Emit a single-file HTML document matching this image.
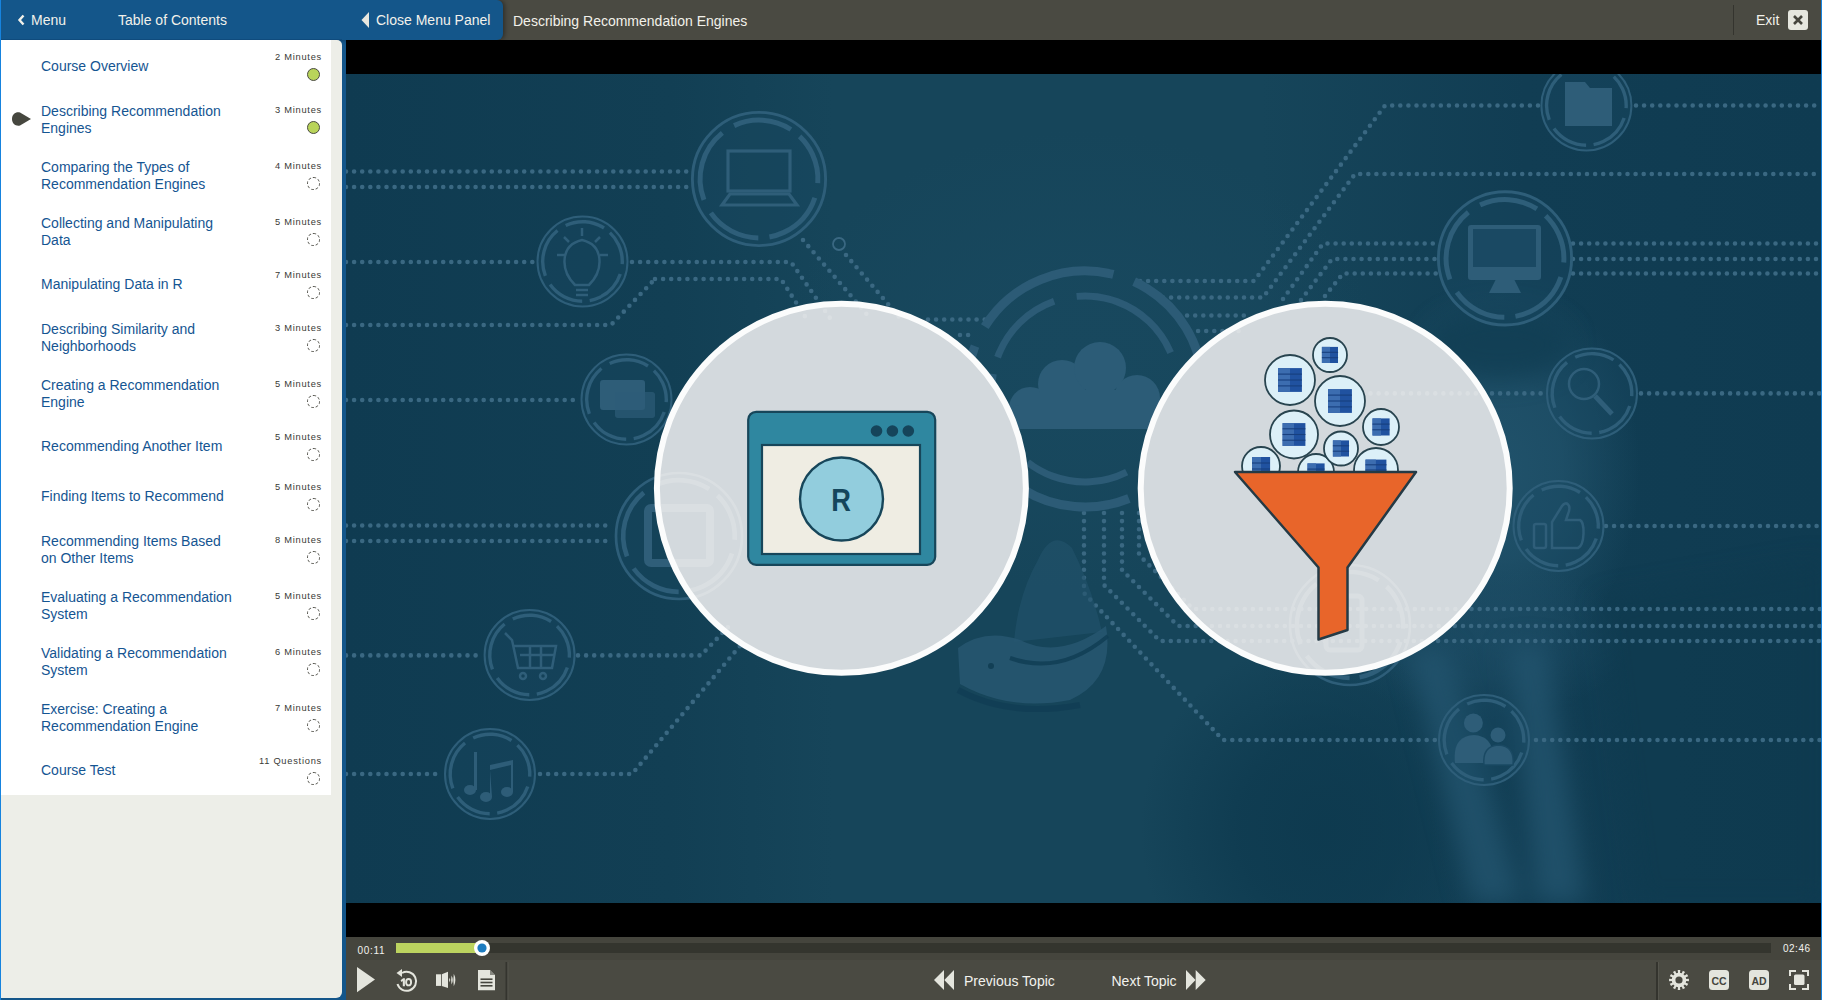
<!DOCTYPE html>
<html><head><meta charset="utf-8"><style>
*{box-sizing:border-box}
html,body{margin:0;padding:0;width:1822px;height:1000px;overflow:hidden;background:#14568a;font-family:"Liberation Sans",sans-serif}
.abs{position:absolute}
#lb{position:absolute;left:0;top:0;width:1px;height:1000px;background:#1683de}
#rb{position:absolute;right:0;top:0;width:1px;height:1000px;background:#1683de}
#hdr{position:absolute;left:0;top:0;width:1821px;height:40px;background:#4a4a42}
#hdrblue{position:absolute;left:0;top:0;width:503px;height:40px;background:#14568a;border-radius:0 6px 6px 0;box-shadow:2px 0 4px rgba(0,0,0,.35)}
.htxt{position:absolute;color:#f2f1ea;font-size:14px;line-height:16px;white-space:nowrap}
#side{position:absolute;left:1px;top:40px;width:341px;height:958px;background:#edeee8;border-radius:0 5px 6px 0;overflow:hidden}
#list{position:absolute;left:0;top:0;width:330px;height:755px;background:#fff}
.row{position:absolute;left:0;width:330px}
.tt{position:absolute;left:40px;color:#155592;font-size:14px;line-height:17px;white-space:nowrap}
.mn{position:absolute;right:9px;color:#3a3a36;font-size:9.3px;line-height:12px;white-space:nowrap;letter-spacing:0.75px}
.ck{position:absolute;left:306px;width:13px;height:13px;border-radius:50%}
.done{background:#b9d45a;border:1px solid #4a4a42}
.todo{border:1px dashed #55554e}
.ptr{position:absolute;left:9.5px;top:21px}
#video{position:absolute;left:346px;top:40px;width:1475px;height:897px;background:#000;overflow:hidden}
#ctrl{position:absolute;left:346px;top:937px;width:1475px;height:63px;background:#4a4a42}
.ct{position:absolute;color:#f2f2ee;white-space:nowrap}
</style></head><body>
<div id="hdr"></div>
<div id="hdrblue"></div>
<div class="htxt" style="left:17px;top:12px"><svg width="9" height="12" viewBox="0 0 9 12" style="position:absolute;left:0;top:1.5px"><path d="M6.5 1.5 L2.5 6 L6.5 10.5" stroke="#f2f1ea" stroke-width="2.4" fill="none"/></svg><span style="position:absolute;left:14px;top:0">Menu</span></div>
<div class="htxt" style="left:118px;top:12px">Table of Contents</div>
<svg class="abs" style="left:360px;top:11px" width="11" height="18" viewBox="0 0 11 18"><path d="M9 1 L1.5 9 L9 17Z" fill="#e8e7df"/></svg>
<div class="htxt" style="left:376px;top:12px">Close Menu Panel</div>
<div class="htxt" style="left:513px;top:13px">Describing Recommendation Engines</div>
<div class="abs" style="left:1733px;top:5px;width:1px;height:30px;background:#34342e"></div>
<div class="htxt" style="left:1756px;top:12px">Exit</div>
<div class="abs" style="left:1788px;top:10px;width:20px;height:20px;background:#e6e7df;border-radius:3px"><svg width="20" height="20" viewBox="0 0 20 20"><path d="M6 6 L14 14 M14 6 L6 14" stroke="#45453d" stroke-width="2.6"/></svg></div>
<div class="abs" style="left:1px;top:39px;width:341px;height:1px;background:#0f4b7d"></div>
<div id="side"><div id="list">
<div class="row" style="top:0px;height:50px"><div class="tt" style="top:18.3px">Course Overview</div><div class="mn" style="top:11px">2 Minutes</div><div class="ck done" style="top:28px"></div></div>
<div class="row" style="top:50px;height:56px"><div class="tt" style="top:13.3px">Describing Recommendation<br>Engines</div><div class="mn" style="top:14px">3 Minutes</div><div class="ck done" style="top:31px"></div><svg class="ptr" width="22" height="16" viewBox="0 0 22 16"><path d="M1 8 C1 3 5 0.5 9 1.5 L20 8 L9 14.5 C5 15.5 1 13 1 8Z" fill="#46473f"/></svg></div>
<div class="row" style="top:106px;height:56px"><div class="tt" style="top:13.3px">Comparing the Types of<br>Recommendation Engines</div><div class="mn" style="top:14px">4 Minutes</div><div class="ck todo" style="top:31px"></div></div>
<div class="row" style="top:162px;height:56px"><div class="tt" style="top:13.3px">Collecting and Manipulating<br>Data</div><div class="mn" style="top:14px">5 Minutes</div><div class="ck todo" style="top:31px"></div></div>
<div class="row" style="top:218px;height:50px"><div class="tt" style="top:18.3px">Manipulating Data in R</div><div class="mn" style="top:11px">7 Minutes</div><div class="ck todo" style="top:28px"></div></div>
<div class="row" style="top:268px;height:56px"><div class="tt" style="top:13.3px">Describing Similarity and<br>Neighborhoods</div><div class="mn" style="top:14px">3 Minutes</div><div class="ck todo" style="top:31px"></div></div>
<div class="row" style="top:324px;height:56px"><div class="tt" style="top:13.3px">Creating a Recommendation<br>Engine</div><div class="mn" style="top:14px">5 Minutes</div><div class="ck todo" style="top:31px"></div></div>
<div class="row" style="top:380px;height:50px"><div class="tt" style="top:18.3px">Recommending Another Item</div><div class="mn" style="top:11px">5 Minutes</div><div class="ck todo" style="top:28px"></div></div>
<div class="row" style="top:430px;height:50px"><div class="tt" style="top:18.3px">Finding Items to Recommend</div><div class="mn" style="top:11px">5 Minutes</div><div class="ck todo" style="top:28px"></div></div>
<div class="row" style="top:480px;height:56px"><div class="tt" style="top:13.3px">Recommending Items Based<br>on Other Items</div><div class="mn" style="top:14px">8 Minutes</div><div class="ck todo" style="top:31px"></div></div>
<div class="row" style="top:536px;height:56px"><div class="tt" style="top:13.3px">Evaluating a Recommendation<br>System</div><div class="mn" style="top:14px">5 Minutes</div><div class="ck todo" style="top:31px"></div></div>
<div class="row" style="top:592px;height:56px"><div class="tt" style="top:13.3px">Validating a Recommendation<br>System</div><div class="mn" style="top:14px">6 Minutes</div><div class="ck todo" style="top:31px"></div></div>
<div class="row" style="top:648px;height:56px"><div class="tt" style="top:13.3px">Exercise: Creating a<br>Recommendation Engine</div><div class="mn" style="top:14px">7 Minutes</div><div class="ck todo" style="top:31px"></div></div>
<div class="row" style="top:704px;height:50px"><div class="tt" style="top:18.3px">Course Test</div><div class="mn" style="top:11px">11 Questions</div><div class="ck todo" style="top:28px"></div></div>
</div></div>
<div id="video"><svg width="1475" height="897" viewBox="346 40 1475 897" style="position:absolute;left:0;top:0">
<defs>
<filter id="bl" x="-50%" y="-50%" width="200%" height="200%" color-interpolation-filters="sRGB"><feGaussianBlur stdDeviation="28"/></filter>
<filter id="bl2" x="-50%" y="-50%" width="200%" height="200%" color-interpolation-filters="sRGB"><feGaussianBlur stdDeviation="12"/></filter>
<filter id="bl1" x="-20%" y="-20%" width="140%" height="140%" color-interpolation-filters="sRGB"><feGaussianBlur stdDeviation="0.6"/></filter>
<linearGradient id="bg" x1="0" y1="0" x2="1" y2="0">
<stop offset="0" stop-color="#0f3b51"/><stop offset="0.22" stop-color="#123f54"/><stop offset="0.33" stop-color="#16455a"/><stop offset="0.62" stop-color="#16455a"/><stop offset="0.8" stop-color="#113d53"/><stop offset="1" stop-color="#0f3b51"/>
</linearGradient>
<clipPath id="vc"><rect x="346" y="74" width="1475" height="829"/></clipPath>
</defs>
<rect x="346" y="40" width="1475" height="897" fill="#000"/>
<g clip-path="url(#vc)">
<rect x="346" y="74" width="1475" height="829" fill="url(#bg)"/>
<radialGradient id="g5"><stop offset="0" stop-color="#22546d" stop-opacity="0.9"/><stop offset="0.45" stop-color="#22546d" stop-opacity="0.7200000000000001"/><stop offset="1" stop-color="#22546d" stop-opacity="0"/></radialGradient>
<ellipse cx="1500" cy="470" rx="140" ry="200" fill="url(#g5)"/>
<radialGradient id="g7"><stop offset="0" stop-color="#1a4b62" stop-opacity="0.5"/><stop offset="0.45" stop-color="#1a4b62" stop-opacity="0.4"/><stop offset="1" stop-color="#1a4b62" stop-opacity="0"/></radialGradient>
<ellipse cx="1080" cy="360" rx="300" ry="230" fill="url(#g7)"/>
<radialGradient id="g9"><stop offset="0" stop-color="#1d4d66" stop-opacity="0.7"/><stop offset="0.45" stop-color="#1d4d66" stop-opacity="0.5599999999999999"/><stop offset="1" stop-color="#1d4d66" stop-opacity="0"/></radialGradient>
<ellipse cx="1480" cy="640" rx="150" ry="80" fill="url(#g9)"/>
<radialGradient id="g11"><stop offset="0" stop-color="#0d394e" stop-opacity="0.9"/><stop offset="0.45" stop-color="#0d394e" stop-opacity="0.7200000000000001"/><stop offset="1" stop-color="#0d394e" stop-opacity="0"/></radialGradient>
<ellipse cx="1320" cy="830" rx="180" ry="190" fill="url(#g11)"/>
<g filter="url(#bl2)">
<ellipse cx="1500" cy="345" rx="70" ry="35" fill="#103d53" opacity="0.8"/>
<path d="M1408 648 L1448 648 L1522 903 L1472 903Z" fill="#22536d" opacity="0.85"/>
<path d="M1508 645 L1546 645 L1586 903 L1536 903Z" fill="#22536d" opacity="0.85"/>
<path d="M1600 600 L1821 560 L1821 903 L1640 903Z" fill="#0e394e" opacity="0.5"/>
</g>
<path d="M346,171.5 L689,171.5" fill="none" stroke="#3a6882" stroke-width="4.6" stroke-linecap="round" stroke-dasharray="0 8.1" opacity="1.0"/>
<path d="M346,187 L689,187" fill="none" stroke="#3a6882" stroke-width="4.6" stroke-linecap="round" stroke-dasharray="0 8.1" opacity="1.0"/>
<path d="M346,262 L533,262" fill="none" stroke="#3a6882" stroke-width="4.6" stroke-linecap="round" stroke-dasharray="0 8.1" opacity="1.0"/>
<path d="M632,262 L791,262 L830,318" fill="none" stroke="#3a6882" stroke-width="4.6" stroke-linecap="round" stroke-dasharray="0 8.1" opacity="1.0"/>
<path d="M655,279 L781,279 L806,318" fill="none" stroke="#3a6882" stroke-width="4.6" stroke-linecap="round" stroke-dasharray="0 8.1" opacity="1.0"/>
<path d="M346,325 L611,325 L655,279" fill="none" stroke="#3a6882" stroke-width="4.6" stroke-linecap="round" stroke-dasharray="0 8.1" opacity="1.0"/>
<path d="M803,240 L870,318" fill="none" stroke="#3a6882" stroke-width="4.6" stroke-linecap="round" stroke-dasharray="0 8.1" opacity="1.0"/>
<path d="M846,255 L900,318" fill="none" stroke="#3a6882" stroke-width="4.6" stroke-linecap="round" stroke-dasharray="0 8.1" opacity="1.0"/>
<circle cx="839" cy="244" r="6" fill="none" stroke="#3a6882" stroke-width="1.8"/>
<path d="M346,400 L577,400" fill="none" stroke="#3a6882" stroke-width="4.6" stroke-linecap="round" stroke-dasharray="0 8.1" opacity="1.0"/>
<path d="M346,525.5 L612,525.5" fill="none" stroke="#3a6882" stroke-width="4.6" stroke-linecap="round" stroke-dasharray="0 8.1" opacity="1.0"/>
<path d="M346,541 L612,541" fill="none" stroke="#3a6882" stroke-width="4.6" stroke-linecap="round" stroke-dasharray="0 8.1" opacity="1.0"/>
<path d="M346,655.4 L480,655.4" fill="none" stroke="#3a6882" stroke-width="4.6" stroke-linecap="round" stroke-dasharray="0 8.1" opacity="1.0"/>
<path d="M578,655.4 L701,655.4 L730,625" fill="none" stroke="#3a6882" stroke-width="4.6" stroke-linecap="round" stroke-dasharray="0 8.1" opacity="1.0"/>
<path d="M346,774 L441,774" fill="none" stroke="#3a6882" stroke-width="4.6" stroke-linecap="round" stroke-dasharray="0 8.1" opacity="1.0"/>
<path d="M540,774 L632,774 L745,640" fill="none" stroke="#3a6882" stroke-width="4.6" stroke-linecap="round" stroke-dasharray="0 8.1" opacity="1.0"/>
<path d="M928,319.5 L985,319.5" fill="none" stroke="#3a6882" stroke-width="4.6" stroke-linecap="round" stroke-dasharray="0 8.1" opacity="1.0"/>
<path d="M960,335 L975,335" fill="none" stroke="#3a6882" stroke-width="4.6" stroke-linecap="round" stroke-dasharray="0 8.1" opacity="1.0"/>
<path d="M1140,281 L1254,281 L1385,105.5 L1539,105.5" fill="none" stroke="#3a6882" stroke-width="4.6" stroke-linecap="round" stroke-dasharray="0 8.1" opacity="1.0"/>
<path d="M1636,105.5 L1821,105.5" fill="none" stroke="#3a6882" stroke-width="4.6" stroke-linecap="round" stroke-dasharray="0 8.1" opacity="1.0"/>
<path d="M1163,297.5 L1263,297.5 L1355,174 L1821,174" fill="none" stroke="#3a6882" stroke-width="4.6" stroke-linecap="round" stroke-dasharray="0 8.1" opacity="1.0"/>
<path d="M1283,299 L1323,243.5 L1437,243.5" fill="none" stroke="#3a6882" stroke-width="4.6" stroke-linecap="round" stroke-dasharray="0 8.1" opacity="1.0"/>
<path d="M1301,300 L1332,259 L1437,259" fill="none" stroke="#3a6882" stroke-width="4.6" stroke-linecap="round" stroke-dasharray="0 8.1" opacity="1.0"/>
<path d="M1325,296 L1343,273.5 L1437,273.5" fill="none" stroke="#3a6882" stroke-width="4.6" stroke-linecap="round" stroke-dasharray="0 8.1" opacity="1.0"/>
<path d="M1573,243.5 L1821,243.5" fill="none" stroke="#3a6882" stroke-width="4.6" stroke-linecap="round" stroke-dasharray="0 8.1" opacity="1.0"/>
<path d="M1573,259 L1821,259" fill="none" stroke="#3a6882" stroke-width="4.6" stroke-linecap="round" stroke-dasharray="0 8.1" opacity="1.0"/>
<path d="M1573,273.5 L1821,273.5" fill="none" stroke="#3a6882" stroke-width="4.6" stroke-linecap="round" stroke-dasharray="0 8.1" opacity="1.0"/>
<path d="M1179,315.5 L1244,315.5" fill="none" stroke="#3a6882" stroke-width="4.6" stroke-linecap="round" stroke-dasharray="0 8.1" opacity="1.0"/>
<path d="M1190,331 L1240,331" fill="none" stroke="#3a6882" stroke-width="4.6" stroke-linecap="round" stroke-dasharray="0 8.1" opacity="1.0"/>
<path d="M1330,393.4 L1543,393.4" fill="none" stroke="#3a6882" stroke-width="4.6" stroke-linecap="round" stroke-dasharray="0 8.1" opacity="1.0"/>
<path d="M1641,393.4 L1821,393.4" fill="none" stroke="#3a6882" stroke-width="4.6" stroke-linecap="round" stroke-dasharray="0 8.1" opacity="1.0"/>
<path d="M1606,526 L1821,526" fill="none" stroke="#3a6882" stroke-width="4.6" stroke-linecap="round" stroke-dasharray="0 8.1" opacity="1.0"/>
<path d="M1084,513 L1084,593 L1223,740 L1435,740" fill="none" stroke="#3a6882" stroke-width="4.6" stroke-linecap="round" stroke-dasharray="0 8.1" opacity="1.0"/>
<path d="M1104,513 L1104,585 L1160,641 L1821,641" fill="none" stroke="#3a6882" stroke-width="4.6" stroke-linecap="round" stroke-dasharray="0 8.1" opacity="1.0"/>
<path d="M1122,513 L1122,570 L1178,626 L1821,626" fill="none" stroke="#3a6882" stroke-width="4.6" stroke-linecap="round" stroke-dasharray="0 8.1" opacity="1.0"/>
<path d="M1139,513 L1139,555 L1193,609 L1821,609" fill="none" stroke="#3a6882" stroke-width="4.6" stroke-linecap="round" stroke-dasharray="0 8.1" opacity="1.0"/>
<path d="M1536,740 L1821,740" fill="none" stroke="#3a6882" stroke-width="4.6" stroke-linecap="round" stroke-dasharray="0 8.1" opacity="1.0"/>
<g filter="url(#bl1)"><path d="M1038 560 Q1052 528 1072 548 Q1092 588 1102 632 L1014 642 Q1018 595 1038 560 Z" fill="#23536c" opacity="0.6"/><path d="M958 648 Q985 628 1020 640 Q1060 660 1106 626 Q1115 680 1070 700 Q1010 712 960 684 Z" fill="#285872" opacity="0.8"/><path d="M1010 658 Q1060 676 1108 636" fill="none" stroke="#123f55" stroke-width="4" opacity="0.9"/><circle cx="991" cy="666" r="3" fill="#123f55"/><path d="M958 690 Q1010 718 1080 705" fill="none" stroke="#0f3b51" stroke-width="6" opacity="0.6"/></g>
<circle cx="1085" cy="389" r="118" fill="none" stroke="#2c5b76" stroke-width="9" stroke-dasharray="148 22 126 30 89 30 119 22 133 22" transform="rotate(-148 1085 389)"/>
<circle cx="1085" cy="389" r="93" fill="none" stroke="#2c5b76" stroke-width="7" stroke-dasharray="82 23 117 29 88 23 105 29 70 18" transform="rotate(-160 1085 389)"/>
<g fill="#2c5c77"><circle cx="1030" cy="408" r="21"/><circle cx="1062" cy="384" r="24"/><circle cx="1100" cy="368" r="26"/><circle cx="1137" cy="398" r="23"/><rect x="1009" y="405" width="151" height="24" rx="10"/><rect x="1040" y="390" width="100" height="30"/></g>
<circle cx="759" cy="179" r="66.6" fill="#1a4a64" fill-opacity="0.35" stroke="#2e5e79" stroke-width="2.9"/>
<circle cx="759" cy="179" r="58.9" fill="none" stroke="#2e5e79" stroke-width="5.0" stroke-dasharray="59.3 11.1 51.8 14.8 63.0 11.1 55.6 14.8 74.1 14.8" transform="rotate(-115 759 179)"/>
<g fill="none" stroke="#2f5e79" stroke-width="3.2"><rect x="728" y="151" width="62" height="40"/><path d="M722 205 L797 205 L789 194 L730 194 Z"/></g>
<circle cx="582.5" cy="261.5" r="45" fill="#1a4a64" fill-opacity="0.35" stroke="#2e5e79" stroke-width="2.0"/>
<circle cx="582.5" cy="261.5" r="39.8" fill="none" stroke="#2e5e79" stroke-width="3.4" stroke-dasharray="40.0 7.5 35.0 10.0 42.5 7.5 37.5 10.0 50.0 10.0" transform="rotate(-115 582.5 261.5)"/>
<g fill="none" stroke="#2f5e79" stroke-width="2.5"><path d="M575 285 C560 270 560 245 582 240 C604 245 604 270 589 285 Z"/><path d="M576 290 h12 M576 295 h12"/><path d="M582 228 v8 M557 255 h8 M600 255 h8 M564 237 l5 5 M600 237 l-5 5"/></g>
<circle cx="626.5" cy="399.5" r="45" fill="#1a4a64" fill-opacity="0.35" stroke="#2e5e79" stroke-width="2.0"/>
<circle cx="626.5" cy="399.5" r="39.8" fill="none" stroke="#2e5e79" stroke-width="3.4" stroke-dasharray="40.0 7.5 35.0 10.0 42.5 7.5 37.5 10.0 50.0 10.0" transform="rotate(-115 626.5 399.5)"/>
<g fill="#2e5d78"><rect x="600" y="380" width="45" height="30" rx="3"/><rect x="615" y="392" width="40" height="26" rx="3" opacity="0.7"/></g>
<circle cx="679" cy="536" r="63" fill="#1a4a64" fill-opacity="0.35" stroke="#2e5e79" stroke-width="2.7"/>
<circle cx="679" cy="536" r="55.8" fill="none" stroke="#2e5e79" stroke-width="4.7" stroke-dasharray="56.1 10.5 49.0 14.0 59.6 10.5 52.5 14.0 70.1 14.0" transform="rotate(-115 679 536)"/>
<rect x="648" y="508" width="62" height="55" rx="3" fill="none" stroke="#2f5e79" stroke-width="8"/>
<circle cx="529.6" cy="655" r="45" fill="#1a4a64" fill-opacity="0.35" stroke="#2e5e79" stroke-width="2.0"/>
<circle cx="529.6" cy="655" r="39.8" fill="none" stroke="#2e5e79" stroke-width="3.4" stroke-dasharray="40.0 7.5 35.0 10.0 42.5 7.5 37.5 10.0 50.0 10.0" transform="rotate(-115 529.6 655)"/>
<g fill="none" stroke="#2f5e79" stroke-width="2.5"><path d="M505 633 L512 640 L518 668 L552 668 L556 646 L513 646"/><path d="M520 655 h34 M530 646 v22 M541 646 v22"/><circle cx="523" cy="676" r="3"/><circle cx="543" cy="676" r="3"/></g>
<circle cx="490" cy="774" r="45" fill="#1a4a64" fill-opacity="0.35" stroke="#2e5e79" stroke-width="2.0"/>
<circle cx="490" cy="774" r="39.8" fill="none" stroke="#2e5e79" stroke-width="3.4" stroke-dasharray="40.0 7.5 35.0 10.0 42.5 7.5 37.5 10.0 50.0 10.0" transform="rotate(-115 490 774)"/>
<g fill="#2e5d78"><ellipse cx="470" cy="790" rx="6" ry="5"/><rect x="474" y="752" width="3" height="38"/><ellipse cx="486" cy="797" rx="6" ry="5"/><ellipse cx="507" cy="792" rx="6" ry="5"/><path d="M490 770 L511 765 L511 792 L513 792 L513 760 L490 765 L490 797 L492 797Z"/></g>
<circle cx="1586.4" cy="105.5" r="45" fill="#1a4a64" fill-opacity="0.35" stroke="#2e5e79" stroke-width="2.0"/>
<circle cx="1586.4" cy="105.5" r="39.8" fill="none" stroke="#2e5e79" stroke-width="3.4" stroke-dasharray="40.0 7.5 35.0 10.0 42.5 7.5 37.5 10.0 50.0 10.0" transform="rotate(-115 1586.4 105.5)"/>
<path d="M1565 82 L1585 82 L1590 88 L1612 88 L1612 126 L1565 126 Z" fill="#2e5d78"/>
<circle cx="1505" cy="258.4" r="66.6" fill="#1a4a64" fill-opacity="0.35" stroke="#2e5e79" stroke-width="2.9"/>
<circle cx="1505" cy="258.4" r="58.9" fill="none" stroke="#2e5e79" stroke-width="5.0" stroke-dasharray="59.3 11.1 51.8 14.8 63.0 11.1 55.6 14.8 74.1 14.8" transform="rotate(-115 1505 258.4)"/>
<g fill="#2e5d78"><rect x="1468" y="225" width="73" height="55" rx="3"/><path d="M1496 279 L1514 279 L1521 293 L1489 293Z"/></g><rect x="1473" y="229" width="63" height="38" fill="#1a4963"/>
<circle cx="1592" cy="393.4" r="45" fill="#1a4a64" fill-opacity="0.35" stroke="#2e5e79" stroke-width="2.0"/>
<circle cx="1592" cy="393.4" r="39.8" fill="none" stroke="#2e5e79" stroke-width="3.4" stroke-dasharray="40.0 7.5 35.0 10.0 42.5 7.5 37.5 10.0 50.0 10.0" transform="rotate(-115 1592 393.4)"/>
<g fill="none" stroke="#2f5e79" stroke-width="2.5"><circle cx="1584" cy="384" r="15"/><path d="M1595 396 L1612 414" stroke-width="5"/></g>
<circle cx="1558.5" cy="526" r="45" fill="#1a4a64" fill-opacity="0.35" stroke="#2e5e79" stroke-width="2.0"/>
<circle cx="1558.5" cy="526" r="39.8" fill="none" stroke="#2e5e79" stroke-width="3.4" stroke-dasharray="40.0 7.5 35.0 10.0 42.5 7.5 37.5 10.0 50.0 10.0" transform="rotate(-115 1558.5 526)"/>
<g fill="none" stroke="#2f5e79" stroke-width="2.5"><rect x="1534" y="524" width="12" height="24" rx="2"/><path d="M1552 548 L1552 522 L1562 506 C1566 500 1572 505 1568 514 L1566 520 L1580 520 C1585 522 1585 545 1578 548 Z"/></g>
<circle cx="1350" cy="625" r="60" fill="#1a4a64" fill-opacity="0.35" stroke="#2e5e79" stroke-width="2.6"/>
<circle cx="1350" cy="625" r="53.1" fill="none" stroke="#2e5e79" stroke-width="4.5" stroke-dasharray="53.4 10.0 46.7 13.3 56.7 10.0 50.0 13.3 66.7 13.3" transform="rotate(-115 1350 625)"/>
<circle cx="1484" cy="740" r="45" fill="#1a4a64" fill-opacity="0.35" stroke="#2e5e79" stroke-width="2.0"/>
<circle cx="1484" cy="740" r="39.8" fill="none" stroke="#2e5e79" stroke-width="3.4" stroke-dasharray="40.0 7.5 35.0 10.0 42.5 7.5 37.5 10.0 50.0 10.0" transform="rotate(-115 1484 740)"/>
<g fill="#2e5d78"><circle cx="1473.4" cy="723" r="9.5"/><path d="M1455 763 Q1452 736 1474 735 Q1495 736 1493 763 Z"/><circle cx="1498" cy="735" r="7.5"/><path d="M1484 765 Q1482 746 1498.5 745 Q1515 746 1513 765 Z" stroke="#1a4963" stroke-width="1.5"/></g>
</g>
<circle cx="841.4" cy="488.3" r="184.5" fill="#d3d9dd" stroke="#fbfcfc" stroke-width="6"/>
<circle cx="1325.2" cy="488.3" r="184.5" fill="#d3d9dd" stroke="#fbfcfc" stroke-width="6"/>
<defs><clipPath id="cc"><circle cx="841.4" cy="488.3" r="181.5"/><circle cx="1325.2" cy="488.3" r="181.5"/></clipPath><filter id="wh" color-interpolation-filters="sRGB"><feColorMatrix type="matrix" values="0 0 0 0 1 0 0 0 0 1 0 0 0 0 1 0 0 0 1 0"/></filter></defs>
<g clip-path="url(#cc)"><g filter="url(#wh)" opacity="0.17"><path d="M346,171.5 L689,171.5" fill="none" stroke="#3a6882" stroke-width="4.6" stroke-linecap="round" stroke-dasharray="0 8.1" opacity="1.0"/><path d="M346,187 L689,187" fill="none" stroke="#3a6882" stroke-width="4.6" stroke-linecap="round" stroke-dasharray="0 8.1" opacity="1.0"/><path d="M346,262 L533,262" fill="none" stroke="#3a6882" stroke-width="4.6" stroke-linecap="round" stroke-dasharray="0 8.1" opacity="1.0"/><path d="M632,262 L791,262 L830,318" fill="none" stroke="#3a6882" stroke-width="4.6" stroke-linecap="round" stroke-dasharray="0 8.1" opacity="1.0"/><path d="M655,279 L781,279 L806,318" fill="none" stroke="#3a6882" stroke-width="4.6" stroke-linecap="round" stroke-dasharray="0 8.1" opacity="1.0"/><path d="M346,325 L611,325 L655,279" fill="none" stroke="#3a6882" stroke-width="4.6" stroke-linecap="round" stroke-dasharray="0 8.1" opacity="1.0"/><path d="M803,240 L870,318" fill="none" stroke="#3a6882" stroke-width="4.6" stroke-linecap="round" stroke-dasharray="0 8.1" opacity="1.0"/><path d="M846,255 L900,318" fill="none" stroke="#3a6882" stroke-width="4.6" stroke-linecap="round" stroke-dasharray="0 8.1" opacity="1.0"/><path d="M346,400 L577,400" fill="none" stroke="#3a6882" stroke-width="4.6" stroke-linecap="round" stroke-dasharray="0 8.1" opacity="1.0"/><path d="M346,525.5 L612,525.5" fill="none" stroke="#3a6882" stroke-width="4.6" stroke-linecap="round" stroke-dasharray="0 8.1" opacity="1.0"/><path d="M346,541 L612,541" fill="none" stroke="#3a6882" stroke-width="4.6" stroke-linecap="round" stroke-dasharray="0 8.1" opacity="1.0"/><path d="M346,655.4 L480,655.4" fill="none" stroke="#3a6882" stroke-width="4.6" stroke-linecap="round" stroke-dasharray="0 8.1" opacity="1.0"/><path d="M578,655.4 L701,655.4 L730,625" fill="none" stroke="#3a6882" stroke-width="4.6" stroke-linecap="round" stroke-dasharray="0 8.1" opacity="1.0"/><path d="M346,774 L441,774" fill="none" stroke="#3a6882" stroke-width="4.6" stroke-linecap="round" stroke-dasharray="0 8.1" opacity="1.0"/><path d="M540,774 L632,774 L745,640" fill="none" stroke="#3a6882" stroke-width="4.6" stroke-linecap="round" stroke-dasharray="0 8.1" opacity="1.0"/><path d="M928,319.5 L985,319.5" fill="none" stroke="#3a6882" stroke-width="4.6" stroke-linecap="round" stroke-dasharray="0 8.1" opacity="1.0"/><path d="M960,335 L975,335" fill="none" stroke="#3a6882" stroke-width="4.6" stroke-linecap="round" stroke-dasharray="0 8.1" opacity="1.0"/><path d="M1140,281 L1254,281 L1385,105.5 L1539,105.5" fill="none" stroke="#3a6882" stroke-width="4.6" stroke-linecap="round" stroke-dasharray="0 8.1" opacity="1.0"/><path d="M1636,105.5 L1821,105.5" fill="none" stroke="#3a6882" stroke-width="4.6" stroke-linecap="round" stroke-dasharray="0 8.1" opacity="1.0"/><path d="M1163,297.5 L1263,297.5 L1355,174 L1821,174" fill="none" stroke="#3a6882" stroke-width="4.6" stroke-linecap="round" stroke-dasharray="0 8.1" opacity="1.0"/><path d="M1283,299 L1323,243.5 L1437,243.5" fill="none" stroke="#3a6882" stroke-width="4.6" stroke-linecap="round" stroke-dasharray="0 8.1" opacity="1.0"/><path d="M1301,300 L1332,259 L1437,259" fill="none" stroke="#3a6882" stroke-width="4.6" stroke-linecap="round" stroke-dasharray="0 8.1" opacity="1.0"/><path d="M1325,296 L1343,273.5 L1437,273.5" fill="none" stroke="#3a6882" stroke-width="4.6" stroke-linecap="round" stroke-dasharray="0 8.1" opacity="1.0"/><path d="M1573,243.5 L1821,243.5" fill="none" stroke="#3a6882" stroke-width="4.6" stroke-linecap="round" stroke-dasharray="0 8.1" opacity="1.0"/><path d="M1573,259 L1821,259" fill="none" stroke="#3a6882" stroke-width="4.6" stroke-linecap="round" stroke-dasharray="0 8.1" opacity="1.0"/><path d="M1573,273.5 L1821,273.5" fill="none" stroke="#3a6882" stroke-width="4.6" stroke-linecap="round" stroke-dasharray="0 8.1" opacity="1.0"/><path d="M1179,315.5 L1244,315.5" fill="none" stroke="#3a6882" stroke-width="4.6" stroke-linecap="round" stroke-dasharray="0 8.1" opacity="1.0"/><path d="M1190,331 L1240,331" fill="none" stroke="#3a6882" stroke-width="4.6" stroke-linecap="round" stroke-dasharray="0 8.1" opacity="1.0"/><path d="M1330,393.4 L1543,393.4" fill="none" stroke="#3a6882" stroke-width="4.6" stroke-linecap="round" stroke-dasharray="0 8.1" opacity="1.0"/><path d="M1641,393.4 L1821,393.4" fill="none" stroke="#3a6882" stroke-width="4.6" stroke-linecap="round" stroke-dasharray="0 8.1" opacity="1.0"/><path d="M1606,526 L1821,526" fill="none" stroke="#3a6882" stroke-width="4.6" stroke-linecap="round" stroke-dasharray="0 8.1" opacity="1.0"/><path d="M1084,513 L1084,593 L1223,740 L1435,740" fill="none" stroke="#3a6882" stroke-width="4.6" stroke-linecap="round" stroke-dasharray="0 8.1" opacity="1.0"/><path d="M1104,513 L1104,585 L1160,641 L1821,641" fill="none" stroke="#3a6882" stroke-width="4.6" stroke-linecap="round" stroke-dasharray="0 8.1" opacity="1.0"/><path d="M1122,513 L1122,570 L1178,626 L1821,626" fill="none" stroke="#3a6882" stroke-width="4.6" stroke-linecap="round" stroke-dasharray="0 8.1" opacity="1.0"/><path d="M1139,513 L1139,555 L1193,609 L1821,609" fill="none" stroke="#3a6882" stroke-width="4.6" stroke-linecap="round" stroke-dasharray="0 8.1" opacity="1.0"/><path d="M1536,740 L1821,740" fill="none" stroke="#3a6882" stroke-width="4.6" stroke-linecap="round" stroke-dasharray="0 8.1" opacity="1.0"/><circle cx="759" cy="179" r="58.9" fill="none" stroke="#2e5e79" stroke-width="5.0" stroke-dasharray="59.3 11.1 51.8 14.8 63.0 11.1 55.6 14.8 74.1 14.8" transform="rotate(-115 759 179)"/><circle cx="759" cy="179" r="66.6" fill="none" stroke="#2e5e79" stroke-width="2.9"/><circle cx="582.5" cy="261.5" r="39.8" fill="none" stroke="#2e5e79" stroke-width="3.4" stroke-dasharray="40.0 7.5 35.0 10.0 42.5 7.5 37.5 10.0 50.0 10.0" transform="rotate(-115 582.5 261.5)"/><circle cx="582.5" cy="261.5" r="45" fill="none" stroke="#2e5e79" stroke-width="2.0"/><circle cx="626.5" cy="399.5" r="39.8" fill="none" stroke="#2e5e79" stroke-width="3.4" stroke-dasharray="40.0 7.5 35.0 10.0 42.5 7.5 37.5 10.0 50.0 10.0" transform="rotate(-115 626.5 399.5)"/><circle cx="626.5" cy="399.5" r="45" fill="none" stroke="#2e5e79" stroke-width="2.0"/><circle cx="679" cy="536" r="55.8" fill="none" stroke="#2e5e79" stroke-width="4.7" stroke-dasharray="56.1 10.5 49.0 14.0 59.6 10.5 52.5 14.0 70.1 14.0" transform="rotate(-115 679 536)"/><circle cx="679" cy="536" r="63" fill="none" stroke="#2e5e79" stroke-width="2.7"/><rect x="648" y="508" width="62" height="55" rx="3" fill="none" stroke="#2f5e79" stroke-width="8"/><rect x="1326" y="596" width="36" height="54" rx="4" fill="none" stroke="#2f5e79" stroke-width="5"/><circle cx="529.6" cy="655" r="39.8" fill="none" stroke="#2e5e79" stroke-width="3.4" stroke-dasharray="40.0 7.5 35.0 10.0 42.5 7.5 37.5 10.0 50.0 10.0" transform="rotate(-115 529.6 655)"/><circle cx="529.6" cy="655" r="45" fill="none" stroke="#2e5e79" stroke-width="2.0"/><circle cx="490" cy="774" r="39.8" fill="none" stroke="#2e5e79" stroke-width="3.4" stroke-dasharray="40.0 7.5 35.0 10.0 42.5 7.5 37.5 10.0 50.0 10.0" transform="rotate(-115 490 774)"/><circle cx="490" cy="774" r="45" fill="none" stroke="#2e5e79" stroke-width="2.0"/><circle cx="1586.4" cy="105.5" r="39.8" fill="none" stroke="#2e5e79" stroke-width="3.4" stroke-dasharray="40.0 7.5 35.0 10.0 42.5 7.5 37.5 10.0 50.0 10.0" transform="rotate(-115 1586.4 105.5)"/><circle cx="1586.4" cy="105.5" r="45" fill="none" stroke="#2e5e79" stroke-width="2.0"/><circle cx="1505" cy="258.4" r="58.9" fill="none" stroke="#2e5e79" stroke-width="5.0" stroke-dasharray="59.3 11.1 51.8 14.8 63.0 11.1 55.6 14.8 74.1 14.8" transform="rotate(-115 1505 258.4)"/><circle cx="1505" cy="258.4" r="66.6" fill="none" stroke="#2e5e79" stroke-width="2.9"/><circle cx="1592" cy="393.4" r="39.8" fill="none" stroke="#2e5e79" stroke-width="3.4" stroke-dasharray="40.0 7.5 35.0 10.0 42.5 7.5 37.5 10.0 50.0 10.0" transform="rotate(-115 1592 393.4)"/><circle cx="1592" cy="393.4" r="45" fill="none" stroke="#2e5e79" stroke-width="2.0"/><circle cx="1558.5" cy="526" r="39.8" fill="none" stroke="#2e5e79" stroke-width="3.4" stroke-dasharray="40.0 7.5 35.0 10.0 42.5 7.5 37.5 10.0 50.0 10.0" transform="rotate(-115 1558.5 526)"/><circle cx="1558.5" cy="526" r="45" fill="none" stroke="#2e5e79" stroke-width="2.0"/><circle cx="1350" cy="625" r="53.1" fill="none" stroke="#2e5e79" stroke-width="4.5" stroke-dasharray="53.4 10.0 46.7 13.3 56.7 10.0 50.0 13.3 66.7 13.3" transform="rotate(-115 1350 625)"/><circle cx="1350" cy="625" r="60" fill="none" stroke="#2e5e79" stroke-width="2.6"/><circle cx="1484" cy="740" r="39.8" fill="none" stroke="#2e5e79" stroke-width="3.4" stroke-dasharray="40.0 7.5 35.0 10.0 42.5 7.5 37.5 10.0 50.0 10.0" transform="rotate(-115 1484 740)"/><circle cx="1484" cy="740" r="45" fill="none" stroke="#2e5e79" stroke-width="2.0"/></g></g>
<rect x="748.2" y="411.8" width="187" height="153" rx="8" fill="#2f87a0" stroke="#17465a" stroke-width="2.2"/>
<rect x="762" y="445" width="158" height="109" fill="#efede3" stroke="#17465a" stroke-width="2.2"/>
<circle cx="876.5" cy="431" r="5.8" fill="#15445a"/>
<circle cx="892.4" cy="431" r="5.8" fill="#15445a"/>
<circle cx="908.3" cy="431" r="5.8" fill="#15445a"/>
<circle cx="841.5" cy="499" r="41.5" fill="#92cddd" stroke="#17465a" stroke-width="2.4"/>
<text x="0" y="0" text-anchor="middle" font-family="Liberation Sans" font-weight="bold" font-size="31.7" fill="#15465c" transform="translate(841,511.2) scale(0.86,1)">R</text>
<circle cx="1261" cy="466" r="19" fill="#dcf0f8" stroke="#28444f" stroke-width="1.8"/>
<rect x="1252.0" y="457.0" width="18.1" height="18.1" fill="#2052a0"/>
<rect x="1252.0" y="457.0" width="9.0" height="18.1" fill="#3c6db0"/>
<line x1="1252.0" y1="463.0" x2="1270.0" y2="463.0" stroke="#173f7e" stroke-width="1.1"/>
<line x1="1252.0" y1="469.0" x2="1270.0" y2="469.0" stroke="#173f7e" stroke-width="1.1"/>
<circle cx="1316" cy="472" r="18" fill="#dcf0f8" stroke="#28444f" stroke-width="1.8"/>
<rect x="1307.5" y="463.4" width="17.1" height="17.1" fill="#2052a0"/>
<rect x="1307.5" y="463.4" width="8.5" height="17.1" fill="#3c6db0"/>
<line x1="1307.5" y1="469.1" x2="1324.5" y2="469.1" stroke="#173f7e" stroke-width="1.1"/>
<line x1="1307.5" y1="474.8" x2="1324.5" y2="474.8" stroke="#173f7e" stroke-width="1.1"/>
<circle cx="1376" cy="470" r="22" fill="#dcf0f8" stroke="#28444f" stroke-width="1.8"/>
<rect x="1365.5" y="459.6" width="20.9" height="20.9" fill="#2052a0"/>
<rect x="1365.5" y="459.6" width="10.4" height="20.9" fill="#3c6db0"/>
<line x1="1365.5" y1="464.8" x2="1386.5" y2="464.8" stroke="#173f7e" stroke-width="1.1"/>
<line x1="1365.5" y1="470.0" x2="1386.5" y2="470.0" stroke="#173f7e" stroke-width="1.1"/>
<line x1="1365.5" y1="475.2" x2="1386.5" y2="475.2" stroke="#173f7e" stroke-width="1.1"/>
<circle cx="1330" cy="355" r="17" fill="#dcf0f8" stroke="#28444f" stroke-width="1.8"/>
<rect x="1321.9" y="346.9" width="16.1" height="16.1" fill="#2052a0"/>
<rect x="1321.9" y="346.9" width="8.1" height="16.1" fill="#3c6db0"/>
<line x1="1321.9" y1="352.3" x2="1338.1" y2="352.3" stroke="#173f7e" stroke-width="1.1"/>
<line x1="1321.9" y1="357.7" x2="1338.1" y2="357.7" stroke="#173f7e" stroke-width="1.1"/>
<circle cx="1290" cy="380" r="25" fill="#dcf0f8" stroke="#28444f" stroke-width="1.8"/>
<rect x="1278.1" y="368.1" width="23.8" height="23.8" fill="#2052a0"/>
<rect x="1278.1" y="368.1" width="11.9" height="23.8" fill="#3c6db0"/>
<line x1="1278.1" y1="374.1" x2="1301.9" y2="374.1" stroke="#173f7e" stroke-width="1.1"/>
<line x1="1278.1" y1="380.0" x2="1301.9" y2="380.0" stroke="#173f7e" stroke-width="1.1"/>
<line x1="1278.1" y1="385.9" x2="1301.9" y2="385.9" stroke="#173f7e" stroke-width="1.1"/>
<circle cx="1340" cy="401" r="25" fill="#dcf0f8" stroke="#28444f" stroke-width="1.8"/>
<rect x="1328.1" y="389.1" width="23.8" height="23.8" fill="#2052a0"/>
<rect x="1328.1" y="389.1" width="11.9" height="23.8" fill="#3c6db0"/>
<line x1="1328.1" y1="395.1" x2="1351.9" y2="395.1" stroke="#173f7e" stroke-width="1.1"/>
<line x1="1328.1" y1="401.0" x2="1351.9" y2="401.0" stroke="#173f7e" stroke-width="1.1"/>
<line x1="1328.1" y1="406.9" x2="1351.9" y2="406.9" stroke="#173f7e" stroke-width="1.1"/>
<circle cx="1381" cy="427" r="18" fill="#dcf0f8" stroke="#28444f" stroke-width="1.8"/>
<rect x="1372.5" y="418.4" width="17.1" height="17.1" fill="#2052a0"/>
<rect x="1372.5" y="418.4" width="8.5" height="17.1" fill="#3c6db0"/>
<line x1="1372.5" y1="424.1" x2="1389.5" y2="424.1" stroke="#173f7e" stroke-width="1.1"/>
<line x1="1372.5" y1="429.8" x2="1389.5" y2="429.8" stroke="#173f7e" stroke-width="1.1"/>
<circle cx="1294" cy="434.5" r="24" fill="#dcf0f8" stroke="#28444f" stroke-width="1.8"/>
<rect x="1282.6" y="423.1" width="22.8" height="22.8" fill="#2052a0"/>
<rect x="1282.6" y="423.1" width="11.4" height="22.8" fill="#3c6db0"/>
<line x1="1282.6" y1="428.8" x2="1305.4" y2="428.8" stroke="#173f7e" stroke-width="1.1"/>
<line x1="1282.6" y1="434.5" x2="1305.4" y2="434.5" stroke="#173f7e" stroke-width="1.1"/>
<line x1="1282.6" y1="440.2" x2="1305.4" y2="440.2" stroke="#173f7e" stroke-width="1.1"/>
<circle cx="1341" cy="448.5" r="17" fill="#dcf0f8" stroke="#28444f" stroke-width="1.8"/>
<rect x="1332.9" y="440.4" width="16.1" height="16.1" fill="#2052a0"/>
<rect x="1332.9" y="440.4" width="8.1" height="16.1" fill="#3c6db0"/>
<line x1="1332.9" y1="445.8" x2="1349.1" y2="445.8" stroke="#173f7e" stroke-width="1.1"/>
<line x1="1332.9" y1="451.2" x2="1349.1" y2="451.2" stroke="#173f7e" stroke-width="1.1"/>
<path d="M1235 472 L1416 472 L1347.5 567.5 L1347.5 630 L1318.5 639.5 L1318.5 567.5 Z" fill="#e8652a" stroke="#243a45" stroke-width="2.5" stroke-linejoin="round"/>
</svg></div>
<div id="ctrl"><svg width="1475" height="63" viewBox="346 937 1475 63" style="position:absolute;left:0;top:0">
<rect x="346" y="937" width="1475" height="23" fill="#45453d"/>
<rect x="346" y="960" width="1475" height="40" fill="#4a4a42"/>
<rect x="396" y="943" width="1375" height="10" fill="#34352e"/>
<rect x="396" y="943" width="86" height="10" fill="#bcd35f"/>
<circle cx="482" cy="948" r="8" fill="#fff"/>
<circle cx="482" cy="948" r="4.6" fill="#1d7cc0"/>


<path d="M357 967 L375 979.6 L357 992.3 Z" fill="#e4e5dd"/>
<g fill="none" stroke="#e4e5dd" stroke-width="2"><path d="M397.5 984 A9.5 9.5 0 1 0 402 973"/></g>
<path d="M402 969 L402 977 L396.5 973 Z" fill="#e4e5dd"/>
<path d="M400.6 980.2 L403.2 978.2 L404.9 978.2 L404.9 986.2 L402.8 986.2 L402.8 980.9 L401.4 981.9Z" fill="#e4e5dd"/><ellipse cx="408.6" cy="982.2" rx="2.5" ry="3.2" fill="none" stroke="#e4e5dd" stroke-width="1.9"/>
<g fill="#e4e5dd">
<rect x="436" y="974.3" width="5" height="11.6"/>
<path d="M441.8 974.3 L448 971.8 L448 988.1 L441.8 985.9 Z"/>
<path d="M449.5 977.5 Q451 980 449.5 982.5 Q448.7 980 449.5 977.5Z"/>
<path d="M451.5 975.5 Q454 980 451.5 984.5 Q450.8 980 451.5 975.5Z"/>
<path d="M453.8 973.8 Q457 980 453.8 986.2 Q453 980 453.8 973.8Z"/>
<path d="M478 970 L490 970 L495 975 L495 990.3 L478 990.3 Z"/>
</g>
<path d="M490 970 L490 975 L495 975" fill="#4a4a42" opacity="0.6"/>
<g stroke="#45453d" stroke-width="1.6"><line x1="480.5" y1="979.2" x2="492.5" y2="979.2"/><line x1="480.5" y1="982.5" x2="492.5" y2="982.5"/><line x1="480.5" y1="985.8" x2="492.5" y2="985.8"/></g>
<rect x="505.5" y="962" width="2" height="38" fill="#34342e"/><rect x="507.5" y="962" width="1" height="38" fill="#55554d"/>
<rect x="1656" y="962" width="2" height="38" fill="#34342e"/><rect x="1658" y="962" width="1" height="38" fill="#55554d"/>
<g fill="#e4e5dd">
<path d="M934 980 L944 970 L944 990 Z"/><path d="M944.3 980 L954 970 L954 990 Z"/>
<path d="M1186 970 L1195.5 980 L1186 990 Z"/><path d="M1195.7 970 L1205.7 980 L1195.7 990 Z"/>
</g>


<path d="M1688.92,978.70 L1688.92,981.30 L1686.24,980.96 L1685.75,982.79 L1688.24,983.84 L1686.94,986.08 L1684.79,984.45 L1683.45,985.79 L1685.08,987.94 L1682.84,989.24 L1681.79,986.75 L1679.96,987.24 L1680.30,989.92 L1677.70,989.92 L1678.04,987.24 L1676.21,986.75 L1675.16,989.24 L1672.92,987.94 L1674.55,985.79 L1673.21,984.45 L1671.06,986.08 L1669.76,983.84 L1672.25,982.79 L1671.76,980.96 L1669.08,981.30 L1669.08,978.70 L1671.76,979.04 L1672.25,977.21 L1669.76,976.16 L1671.06,973.92 L1673.21,975.55 L1674.55,974.21 L1672.92,972.06 L1675.16,970.76 L1676.21,973.25 L1678.04,972.76 L1677.70,970.08 L1680.30,970.08 L1679.96,972.76 L1681.79,973.25 L1682.84,970.76 L1685.08,972.06 L1683.45,974.21 L1684.79,975.55 L1686.94,973.92 L1688.24,976.16 L1685.75,977.21 L1686.24,979.04Z M1682.6,980 A3.6 3.6 0 1 0 1675.4,980 A3.6 3.6 0 1 0 1682.6,980Z" fill="#e4e5dd" fill-rule="evenodd"/>
<rect x="1709" y="970" width="20" height="20" rx="3.5" fill="#e4e5dd"/>
<text x="1719" y="984.6" text-anchor="middle" font-family="Liberation Sans" font-weight="bold" font-size="10.5" fill="#45453d">CC</text>
<rect x="1749" y="970" width="20" height="20" rx="3.5" fill="#e4e5dd"/>
<text x="1759" y="984.6" text-anchor="middle" font-family="Liberation Sans" font-weight="bold" font-size="10.5" fill="#45453d">AD</text>
<g fill="none" stroke="#e4e5dd" stroke-width="2"><path d="M1790 976 L1790 971 L1796 971 M1802 971 L1808 971 L1808 976 M1808 984 L1808 989 L1802 989 M1796 989 L1790 989 L1790 984"/></g>
<rect x="1794" y="974.5" width="10.5" height="10.5" rx="1.5" fill="#e4e5dd"/>
</svg>

<div class="ct" style="left:11.5px;top:8px;font-size:10px;line-height:11px;letter-spacing:0.7px">00:11</div>
<div class="ct" style="left:1437px;top:6px;font-size:10px;line-height:11px;letter-spacing:0.5px">02:46</div>
<div class="ct" style="left:618px;top:36px;font-size:14px;line-height:16px">Previous Topic</div>
<div class="ct" style="left:765.5px;top:36px;font-size:14px;line-height:16px">Next Topic</div>
</div>
<div id="lb"></div><div id="rb"></div>
</body></html>
